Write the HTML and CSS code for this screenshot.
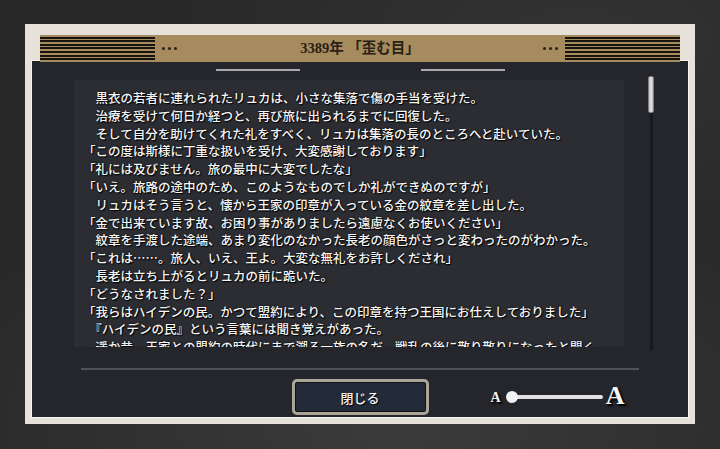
FILE: index.html
```html
<!DOCTYPE html>
<html lang="ja">
<head>
<meta charset="utf-8">
<title>3389年「歪む目」</title>
<link rel="stylesheet" href="styles.css">
</head>
<body>
<div class="frame">
  <header class="head">
    <div class="stripes"></div>
    <div class="dots"><i></i><i></i><i></i></div>
    <h1 class="title">3389年 「歪む目」</h1>
    <div class="dots"><i></i><i></i><i></i></div>
    <div class="stripes"></div>
  </header>
  <section class="panel">
    <div class="deco"><span></span><span></span></div>
    <div class="body-row">
      <div class="textbox">
        <p>　黒衣の若者に連れられたリュカは、小さな集落で傷の手当を受けた。</p>
        <p>　治療を受けて何日か経つと、再び旅に出られるまでに回復した。</p>
        <p>　そして自分を助けてくれた礼をすべく、リュカは集落の長のところへと赴いていた。</p>
        <p>「この度は斯様に丁重な扱いを受け、大変感謝しております」</p>
        <p>「礼には及びません。旅の最中に大変でしたな」</p>
        <p>「いえ。旅路の途中のため、このようなものでしか礼ができぬのですが」</p>
        <p>　リュカはそう言うと、懐から王家の印章が入っている金の紋章を差し出した。</p>
        <p>「金で出来ています故、お困り事がありましたら遠慮なくお使いください」</p>
        <p>　紋章を手渡した途端、あまり変化のなかった長老の顔色がさっと変わったのがわかった。</p>
        <p>「これは……。旅人、いえ、王よ。大変な無礼をお許しくだされ」</p>
        <p>　長老は立ち上がるとリュカの前に跪いた。</p>
        <p>「どうなされました？」</p>
        <p>「我らはハイデンの民。かつて盟約により、この印章を持つ王国にお仕えしておりました」</p>
        <p>　『ハイデンの民』という言葉には聞き覚えがあった。</p>
        <p>　遥か昔、王家との盟約の時代にまで遡る一族の名だ。戦乱の後に散り散りになったと聞く。</p>
      </div>
      <div class="scroll"><div class="thumb"></div></div>
    </div>
    <div class="sep"></div>
    <div class="foot">
      <div></div>
      <button class="close">閉じる</button>
      <div class="size">
        <span class="a-small">A</span>
        <div class="track"><div class="knob"></div></div>
        <span class="a-big">A</span>
      </div>
    </div>
  </section>
</div>
</body>
</html>
```
FILE: styles.css
```css
html, body {
  margin: 0;
  height: 100%;
}
body {
  width: 720px;
  height: 449px;
  box-sizing: border-box;
  padding: 24px 25px 0 25px;
  overflow: hidden;
  background:
    radial-gradient(ellipse 70% 60% at 55% 95%, #3b3b3b 0%, rgba(59,59,59,0) 100%),
    radial-gradient(ellipse 60% 50% at 80% 10%, #333 0%, rgba(51,51,51,0) 100%),
    #282828;
  font-family: "Noto Sans CJK JP", sans-serif;
}
.frame {
  width: 670px;
  height: 400px;
  box-sizing: border-box;
  background: #e6e2d9;
  padding: 11px 6px 6px 6px;
  display: flex;
  flex-direction: column;
}
.head {
  position: relative;
  z-index: 1;
  height: 27px;
  margin: 0 9px -2px 9px;
  background: #a68b5f;
  display: flex;
  align-items: center;
}
.stripes {
  width: 115px;
  height: 27px;
  background: repeating-linear-gradient(to bottom, #a68b5f 0, #a68b5f 1.6px, #17140f 1.6px, #17140f 3.6px);
  flex: none;
}
.dots {
  display: flex;
  gap: 3px;
  margin: 0 7px;
}
.dots i {
  display: block;
  width: 3px;
  height: 3px;
  border-radius: 50%;
  background: #2a2116;
}
.title {
  flex: 1;
  margin: 0;
  text-align: center;
  font-family: "Liberation Serif", "Noto Sans CJK JP", serif;
  font-weight: bold;
  font-size: 14.5px;
  color: #2a2116;
  line-height: 27px;
}
.panel {
  flex: 1;
  background: #25262b;
  border: 1px solid #f6f4ef;
  display: flex;
  flex-direction: column;
}
.deco {
  display: flex;
  justify-content: center;
  gap: 121px;
  margin-top: 8px;
}
.deco span {
  display: block;
  width: 84px;
  height: 2px;
  background: #a9a9ab;
}
.body-row {
  display: flex;
  margin-top: 9px;
  padding-left: 42px;
}
.textbox {
  width: 550px;
  height: 267px;
  box-sizing: border-box;
  padding: 9px 0 0 9px;
  background: #2c2d32;
  overflow: hidden;
  color: #f7f7f7;
  font-size: 12.5px;
  font-weight: 500;
  line-height: 17.8px;
  white-space: nowrap;
  text-shadow: 1px 1px 1px #000, 0 0 2px #000;
}
.textbox p {
  margin: 0;
}
.scroll {
  position: relative;
  margin: -4px 0 0 24px;
  width: 6px;
  height: 274px;
  display: flex;
  justify-content: center;
}
.scroll::before {
  content: "";
  width: 3px;
  border-radius: 2px;
  background: #18191d;
}
.thumb {
  position: absolute;
  top: 0;
  left: 0;
  width: 6px;
  height: 37px;
  box-sizing: border-box;
  border: 1px solid #7f7f80;
  border-radius: 2px;
  background: linear-gradient(to right, #bdbdbd, #e8e8e8 50%, #b8b8b8);
}
.sep {
  height: 2px;
  margin: 18px 49px 0 49px;
  background: #515258;
}
.foot {
  display: grid;
  grid-template-columns: 1fr auto 1fr;
  align-items: center;
  margin-top: 9px;
}
.close {
  width: 137px;
  height: 36px;
  box-sizing: border-box;
  border: 3px solid #aaa597;
  border-radius: 5px;
  background: #232b39;
  box-shadow: inset 0 0 0 1px #0e1016;
  color: #f2f2f2;
  font-family: "Noto Sans CJK JP", sans-serif;
  font-size: 13px;
  font-weight: 500;
  padding: 0;
  text-shadow: 1px 1px 1px #000;
}
.size {
  display: flex;
  align-items: center;
  margin-left: 62px;
}
.a-small, .a-big {
  font-family: "Liberation Serif", serif;
  font-weight: bold;
  color: #f4f4f4;
  text-shadow: 1px 1px 1px #000, 2px 2px 2px #000;
}
.a-small {
  font-size: 14px;
  margin-top: 2px;
}
.a-big {
  font-size: 26px;
  margin-left: 3px;
  margin-top: -3px;
}
.track {
  position: relative;
  margin-left: 6px;
  width: 96px;
  height: 4px;
  border-radius: 2px;
  background: #e2e2e2;
}
.knob {
  position: absolute;
  left: -1px;
  top: -4px;
  width: 12px;
  height: 12px;
  border-radius: 50%;
  background: #f2f2f2;
}
```
